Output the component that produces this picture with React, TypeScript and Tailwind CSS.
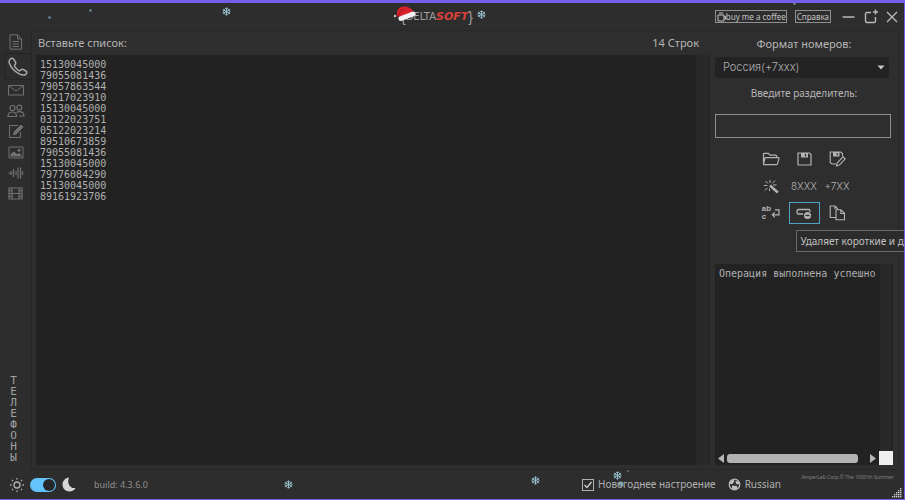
import React, { useState } from "react";

const sans = "font-['Noto_Sans','Open_Sans',sans-serif]";
const mono = "font-['DejaVu_Sans_Mono','Liberation_Mono',monospace]";

const numbers = [
  "15130045000", "79055081436", "79057863544", "79217023910", "15130045000",
  "03122023751", "05122023214", "89510673859", "79055081436", "15130045000",
  "79776084290", "15130045000", "89161923706",
].join("\n");

type IconProps = { w: number; h: number; children: React.ReactNode; sw?: number };

function Icon({ w, h, children, sw = 1 }: IconProps) {
  return (
    <svg width={w} height={h} viewBox={`0 0 ${w} ${h}`} fill="none" stroke="currentColor" strokeWidth={sw} aria-hidden="true">
      {children}
    </svg>
  );
}

const DocIcon = () => (
  <Icon w={14} h={16}>
    <path d="M1 .8h7.5L12.5 5v10.2H1zM8.5.8V5h4M3.5 7.5h6.500M3.500 10h6.500M3.500 12.500h6.500" />
  </Icon>
);
const PhoneIcon = () => (
  <Icon w={20} h={19} sw={1.5}>
    <path d="M2.200 2.200C3.500.8 5 1 6 2.600l1.400 2.200c.7 1.200.5 2-.5 2.900-.8.7-.6 1.300.4 2.500.9 1.200 2 2.300 3.200 3.100 1 .6 1.600.6 2.300-.2.8-.9 1.600-1 2.700-.4l2.300 1.300c1.400.8 1.400 2 .2 3.100-1.600 1.400-4 1.200-6.700-.2C6.900 14.700 3 10.500 1.600 6.800c-.7-1.900-.6-3.500.6-4.600z" />
  </Icon>
);
const MailIcon = () => (
  <Icon w={18} h={12}>
    <path d="M1.500 1.500h15v9.500h-15zM1.500 1.500L9 7l7.500-5.500" />
  </Icon>
);
const PeopleIcon = () => (
  <Icon w={18} h={14} sw={1.2}>
    <circle cx="5.500" cy="4" r="2.500" />
    <circle cx="12.300" cy="3.600" r="2.500" />
    <path d="M1 12.500c0-3 1.600-4.500 4.300-4.500s4.200 1.500 4.200 4.500zM9.500 8.500c.8-.6 1.700-.8 2.800-.8 2.900 0 4.700 1.500 4.700 4.300h-5" />
  </Icon>
);
const EditIcon = () => (
  <Icon w={16} h={15}>
    <path d="M10 1.500H1.500v12h11V8" />
    <path d="M5.500 10.800l.8-3L13 1l2 1.900-6.700 6.900z" fill="currentColor" />
  </Icon>
);
const ImageIcon = () => (
  <Icon w={16} h={13}>
    <path d="M1 1h14v11H1z" />
    <path d="M2.500 10.500V8L6 5.500l3 2.500 2-1 2.500 2v1.500z" fill="currentColor" stroke="none" />
    <circle cx="11" cy="4.300" r="1.500" fill="currentColor" stroke="none" />
  </Icon>
);
const WaveIcon = () => (
  <Icon w={16} h={14} sw={1.2}>
    <path d="M.5 7h4M3 5v4M5.500 3v8M8 5v4M10 1.500v11M12.500 1.500v11M14.500 5v4" />
  </Icon>
);
const FilmIcon = () => (
  <Icon w={15} h={13} sw={1.2}>
    <path d="M1 1h13v11H1zM4 1v11M11 1v11M4 6.500h7M1 3.700h3M1 6.500h3M1 9.300h3M11 3.700h3M11 6.500h3M11 9.300h3" />
  </Icon>
);
const FolderIcon = () => (
  <Icon w={18} h={14} sw={1.2}>
    <path d="M1.500 12V2.200c0-.6.3-.9.9-.9h4l1.600 1.900h5.700c.7 0 1 .3 1 1v1.300M1.500 12l1.300-5.500c.2-.6.500-.9 1.200-.9h12c.9 0 1.200.4.9 1.100l-1.400 5.200c-.2.500-.6.800-1.200.8H2.200c-.5 0-.8-.2-.7-.7z" />
  </Icon>
);
const SaveIcon = () => (
  <Icon w={15} h={14} sw={1.2}>
    <path d="M1 1h11.500L14 2.600V13H1z" />
    <path d="M4 1h7v4.500H4z" fill="currentColor" stroke="none" />
    <path d="M8.500 2v2.500" stroke="#2d2d2d" />
  </Icon>
);
const SaveAsIcon = () => (
  <Icon w={17} h={16} sw={1.1}>
    <path d="M7 13H3L1.200 11.500V1h10.500l1.800 1.600v2.500" />
    <path d="M4 1h6.500v4.500H4z" fill="currentColor" stroke="none" />
    <path d="M8.200 2v2.300" stroke="#2d2d2d" />
    <path d="M7.500 15l.8-3.200 5.700-6 2.200 2-5.800 6.300z" />
  </Icon>
);
const WandIcon = () => (
  <Icon w={16} h={15}>
    <path d="M7 1v3M2.500 2l2.300 2.500M12 1.500L9.500 4.300M.8 6.500h3.500M10 6h3.500M2 11.500l2.500-2.700M6.500 9.500v2.500" />
    <path d="M7 6.500l7.800 7" strokeWidth="2.400" />
  </Icon>
);
const CopyIcon = () => (
  <Icon w={17} h={16} sw={1.1}>
    <path d="M6.500 12.500H1.200V1H6l2.500 2.500v1M6 1v3M7 4.800h5l3.500 3.500v6.500H7zM11.800 4.800v3.700h3.700" />
  </Icon>
);
const TrimIcon = () => (
  <Icon w={16} h={13} sw={1.3}>
    <path d="M7 7H2.500C.5 7 .5 2.500 2.500 2.500h10.500c1 0 1 .5 1 2.500" />
    <circle cx="11.500" cy="8.500" r="3.500" fill="currentColor" stroke="none" />
    <path d="M9.500 8.500h4" stroke="#2d2d2d" />
  </Icon>
);

function WrapIcon() {
  return (
    <span className="flex items-center">
      <span className="flex flex-col text-left font-['Liberation_Sans',sans-serif] text-[8px] leading-[8px] font-bold">
        <span>ab</span>
        <span>c</span>
      </span>
      <Icon w={9} h={9} sw={1.2}>
        <path d="M4 .8h4v5H1.500M3.800 3.300L1.300 5.800l2.500 2.500" />
      </Icon>
    </span>
  );
}

function Flake({ place, size = 9 }: { place: string; size?: number }) {
  return (
    <svg className={`pointer-events-none absolute text-[#9ecbd9] ${place}`} width={size} height={size} viewBox="0 0 10 10" fill="none" stroke="currentColor" strokeWidth="1" aria-hidden="true">
      <path d="M5 .5v9M1 2.700l8 4.600M9 2.700L1 7.300M3.500 1L5 2.500 6.500 1M3.500 9L5 7.500 6.500 9M.8 4.500l2-.5L2.300 2M9.200 4.500l-2-.5.5-2M.8 5.500l2 .5-.5 2M9.200 5.500l-2 .5.5 2" />
    </svg>
  );
}

const tabs = [MailIcon, PeopleIcon, EditIcon, ImageIcon, WaveIcon, FilmIcon];
const tabNames = ["Почта", "Аккаунты", "Заметки", "Картинки", "Аудио", "Видео"];
const tool = "flex h-[22px] w-[31px] items-center justify-center text-[#b4b4b4]";

function Sidebar() {
  return (
    <nav className="flex w-[31px] shrink-0 flex-col text-[#717171]">
      <button aria-label="Текст" className="flex h-[23px] items-center justify-center"><DocIcon /></button>
      <button aria-label="Телефоны" className="ml-1 flex h-[27px] items-center justify-center border-y border-l border-[#242424] bg-[#2d2d2d] text-[#a9a9a9]">
        <PhoneIcon />
      </button>
      <div className="flex h-[124px] flex-col">
        {tabs.map((Tab, i) => (
          <button key={tabNames[i]} aria-label={tabNames[i]} className="flex flex-1 items-center justify-center"><Tab /></button>
        ))}
      </div>
      <p className={`mt-auto mb-[7px] ml-2 w-[11px] text-center text-[11px] leading-[11px] break-all text-[#a0a0a0] ${mono}`}>ТЕЛЕФОНЫ</p>
    </nav>
  );
}

function Header() {
  const outlined = "flex h-[13px] items-center border border-[#909090] text-[8px] leading-[11px] text-[#c4c4c4]";
  const brace = "font-['Liberation_Sans',sans-serif] text-sm leading-4";
  return (
    <header className="flex h-[27px] shrink-0 items-center">
      <div className="flex-1" />
      <h1 className="relative mr-6 flex items-center font-['DejaVu_Sans',sans-serif] text-[10px] leading-4 text-[#a0a0a0]">
        <span className={brace}>{"{"}</span>
        <span>DELTA</span>
        <span className="text-[11px] font-bold text-[#d9403a] italic">SOFT</span>
        <span className={brace}>{"}"}</span>
        <svg className="absolute -top-1 -left-2" width="24" height="18" viewBox="0 0 24 18" aria-hidden="true">
          <circle cx="2" cy="11" r="1.200" fill="#c9c9c9" />
          <path d="M4 12C3 5 6 1.500 11 1.500c5 0 8.500 2.500 9.500 6z" fill="#d9202b" />
          <path d="M5 12c1-4 3-7 6-8" stroke="#96141d" fill="none" />
          <path d="M8 13.500l12-4.500" stroke="#f3f3f3" strokeWidth="5" strokeLinecap="round" />
        </svg>
      </h1>
      <div className="flex flex-1 items-center justify-end pr-[6px] text-[#b9b9b9]">
        <button className={`${outlined} mr-2 pl-px`}>
          <Icon w={9} h={10}>
            <path d="M1 3h6v6H1zM7 4.500h1.500v2.500H7M2 1h4" />
          </Icon>
          buy me a coffee
        </button>
        <button className={`${outlined} mr-[11px] px-px`}>Справка</button>
        <button aria-label="Свернуть" className="mr-[9px]"><Icon w={13} h={14} sw={1.500}><path d="M.5 7h12" /></Icon></button>
        <button aria-label="Развернуть" className="mr-2">
          <Icon w={14} h={15} sw={1.400}><path d="M7 3.500H3c-1 0-1.500.5-1.500 1.500v7c0 1 .5 1.500 1.500 1.500h7c1 0 1.500-.5 1.500-1.500V8M11.500.5v5M9 3h5" /></Icon>
        </button>
        <button aria-label="Закрыть"><Icon w={12} h={12} sw={1.400}><path d="M1 1l10 10M11 1L1 11" /></Icon></button>
      </div>
    </header>
  );
}

function Tools() {
  return (
    <div className="mx-auto mt-[10px] grid grid-cols-3 gap-x-[2px] gap-y-[5px]">
      <button aria-label="Открыть" className={tool}><FolderIcon /></button>
      <button aria-label="Сохранить" className={tool}><SaveIcon /></button>
      <button aria-label="Сохранить как" className={tool}><SaveAsIcon /></button>
      <button aria-label="Очистить" className={tool}><WandIcon /></button>
      <button className={`${tool} font-['Inter',sans-serif] text-[10px] font-light`}>8XXX</button>
      <button className={`${tool} font-['Inter',sans-serif] text-[10px] font-light`}>+7XX</button>
      <button aria-label="Перенос" className={tool}><WrapIcon /></button>
      <div className="relative">
        <button aria-label="Удалить" aria-describedby="tip" className={`${tool} border border-[#4fa3c7]`}><TrimIcon /></button>
        <div id="tip" role="tooltip" className="absolute top-7 left-[7px] z-10 border border-[#6a6a6a] bg-[#2b2b2b] px-1 text-[10px] leading-5 whitespace-nowrap text-[#c0c0c0]">
          Удаляет короткие и длинные номера
        </div>
      </div>
      <button aria-label="Копировать" className={tool}><CopyIcon /></button>
    </div>
  );
}

function Output() {
  return (
    <div className="mt-10 flex min-h-0 flex-1 flex-col bg-[#222222]">
      <div className="flex min-h-0 flex-1">
        <output className={`min-w-0 flex-1 px-1 pt-1 text-[10px] leading-[11px] whitespace-nowrap text-[#b0b0b0] ${mono}`}>
          Операция выполнена успешно
        </output>
        <div className="w-[13px] shrink-0 border-r-2 border-[#222222] bg-[#292929]" />
      </div>
      <div className="flex h-[14px] items-center">
        <svg width="12" height="9" viewBox="0 0 12 9" aria-hidden="true"><path d="M9 0v9L3 4.500z" fill="#b5b5b5" /></svg>
        <div className="h-[9px] flex-1 rounded-[3px] bg-[#b2b2b2]" />
        <svg className="ml-[9px]" width="12" height="9" viewBox="0 0 12 9" aria-hidden="true"><path d="M3 0v9l6-4.500z" fill="#b5b5b5" /></svg>
        <div className="size-[14px] bg-[#efefef]" />
      </div>
    </div>
  );
}

function Footer() {
  const [dark, setDark] = useState(true);
  const [festive, setFestive] = useState(true);
  return (
    <footer className="relative flex h-[29px] shrink-0 items-center pl-[9px] text-[#b0b0b0]">
      <Icon w={16} h={16} sw={1.300}>
        <circle cx="8" cy="8" r="3" />
        <path d="M8 1v1.500M8 13.500V15M1 8h1.500M13.500 8H15M3 3l1 1M12 12l1 1M3 13l1-1M12 4l1-1" />
      </Icon>
      <label className="ml-[5px] flex h-[14px] w-[26px] items-center justify-end rounded-full bg-[#62c4fb] p-px">
        <input type="checkbox" aria-label="Тёмная тема" checked={dark} onChange={() => setDark(!dark)} className="size-3 appearance-none rounded-full bg-[#25272b]" />
      </label>
      <svg className="ml-[6px]" width="14" height="15" viewBox="0 0 14 15" aria-hidden="true">
        <path d="M7 .5C3 1 .5 4 .5 7.500c0 4 3 7 7 7 2.700 0 5-1.500 6-3.500-5 1-9-4.500-6.500-10.500z" fill="#d6d6d6" />
      </svg>
      <span className="ml-[18px] text-[9px] text-[#8f8f8f]">build: 4.3.6.0</span>
      <div className="flex-1" />
      <label className="flex items-center gap-1 text-[10px]">
        <span className="relative flex">
          <input type="checkbox" checked={festive} onChange={() => setFestive(!festive)} className="size-3 appearance-none border border-[#b0b0b0]" />
          <svg className="pointer-events-none absolute inset-0" width="12" height="12" viewBox="0 0 12 12" fill="none" stroke="#d0d0d0" strokeWidth="1.300" aria-hidden="true"><path d="M2.500 6L5 8.500 9.500 3" /></svg>
        </span>
        Новогоднее настроение
      </label>
      <button className="ml-3 flex items-center gap-1 text-[10px]">
        <svg width="13" height="13" viewBox="0 0 13 13" aria-hidden="true">
          <circle cx="6.500" cy="6.500" r="5.300" fill="none" stroke="#bdbdbd" strokeWidth="1.200" />
          <path d="M2 3.500l3-2 1.500 1.500-2 3H2zM7.500 2.500L11 4v2.500L8 6zM4 7.500l5 .5.5 2-2.500 2-3-1.500z" fill="#bdbdbd" />
        </svg>
        Russian
      </button>
      <div className="ml-[22px] flex w-[101px] flex-col items-end self-stretch pr-[2px]">
        <span className="mr-[8px] pt-[3px] text-[5px] leading-[8px] whitespace-nowrap text-[#858585]">AmperLab Corp.© The 1000'th Summer</span>
        <svg className="mt-auto mb-px" width="10" height="10" viewBox="0 0 10 10" fill="#c9c9c9" aria-hidden="true">
          {[[8, 0], [6, 2], [8, 2], [4, 4], [6, 4], [8, 4], [2, 6], [4, 6], [6, 6], [8, 6], [0, 8], [2, 8], [4, 8], [6, 8], [8, 8]].map(([x, y]) => (
            <rect key={`${x}-${y}`} x={x} y={y} width="1.400" height="1.400" />
          ))}
        </svg>
      </div>
    </footer>
  );
}

export default function App() {
  return (
    <div className={`relative flex h-screen min-h-[500px] flex-col overflow-hidden border-t-[3px] border-r border-b border-[#7460e8] bg-[#2d2d2d] ${sans}`}>
      <Header />
      <div className="flex min-h-0 flex-1">
        <Sidebar />
        <main className="mr-[5px] flex min-h-0 min-w-0 flex-1 gap-[5px] border border-[#272727] bg-[#2e2e2e] pr-[5px] pb-1 pl-1">
          <section className="flex min-w-0 flex-1 flex-col">
            <div className="flex h-6 shrink-0 items-center justify-between pr-[11px] pl-[2px] text-[11px] text-[#b5b5b5]">
              <label htmlFor="list">Вставьте список:</label>
              <span>14 Строк</span>
            </div>
            <div className="flex min-h-0 flex-1 border-r-2 border-[#262626] bg-[#222222]">
              <textarea id="list" defaultValue={numbers} className={`min-w-0 flex-1 resize-none bg-transparent px-1 pt-1 text-[10px] leading-[11px] text-[#b0b0b0] outline-none ${mono}`} />
              <div className="w-3 shrink-0 bg-[#292929]" />
            </div>
          </section>
          <aside className="flex w-[178px] shrink-0 flex-col text-[#b5b5b5]">
            <label htmlFor="format" className="pt-1 text-center text-[11px] leading-[17px]">Формат номеров:</label>
            <div className="relative mt-[5px] mr-1 flex">
              <select id="format" className="h-[21px] w-full appearance-none rounded-[3px] bg-[#232323] pl-2 font-['Inter',sans-serif] text-[11px] font-light text-[#b0b0b0]">
                <option>Россия(+7xxx)</option>
              </select>
              <svg className="pointer-events-none absolute top-2 right-1" width="8" height="5" viewBox="0 0 8 5" aria-hidden="true"><path d="M.5.5h7L4 4.500z" fill="#c9c9c9" /></svg>
            </div>
            <label htmlFor="divider" className="mt-[7px] text-center text-[10px] leading-4">Введите разделитель:</label>
            <input id="divider" className="mt-[13px] mr-[2px] h-6 border border-[#8f8f8f] bg-transparent px-1 text-[11px] outline-none" />
            <Tools />
            <Output />
          </aside>
        </main>
      </div>
      <Footer />
      <Flake place="top-1 left-[222px]" />
      <Flake place="top-[7px] left-[477px]" />
      <Flake place="bottom-[10px] left-[284px]" />
      <Flake place="bottom-[14px] left-[531px]" />
      <Flake place="bottom-[19px] left-[613px]" />
      <Flake place="bottom-3 left-[618px]" size={6} />
      <Flake place="top-[13px] left-[48px]" size={3} />
      <Flake place="top-[6px] left-[89px]" size={3} />
      <Flake place="-top-px left-[793px]" size={3} />
      <Flake place="bottom-[27px] left-[627px]" size={2} />
    </div>
  );
}
